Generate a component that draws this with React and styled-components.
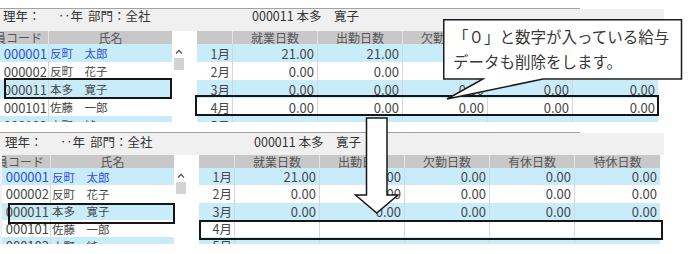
import styled, { createGlobalStyle } from "styled-components"

const GlobalStyle = createGlobalStyle`
  * { box-sizing: border-box; }
  html, body { margin: 0; padding: 0; background: #fff; }
  body { font-family: "Noto Sans CJK JP", "Noto Sans", sans-serif; }
`

const NARROW = `"Liberation Sans Narrow", "Noto Sans CJK JP", sans-serif`

const Page = styled.div`
  position: relative;
  width: 688px;
  height: 254px;
  overflow: hidden;
  background: #fff;
`

const Panel = styled.div`
  position: relative;
  width: 664px;
  height: ${({ $h }) => $h}px;
  margin-top: ${({ $mt }) => $mt}px;
  padding-left: ${({ $shift }) => $shift}px;
  display: flex;
  flex-direction: column;
  overflow: hidden;
  background: #f0f0f0;
`

const TopStrip = styled.div`
  height: 9px;
  flex-shrink: 0;
  margin-left: ${({ $shift }) => -$shift}px;
  background: #fff;
`

const Rule = styled.div`
  width: 580px;
  height: 9px;
  border-bottom: 1px solid #a2a2a2;
`

const HeaderBar = styled.div`
  height: 22px;
  flex-shrink: 0;
  display: flex;
  align-items: flex-start;
  padding: ${({ $pt }) => $pt}px 0 0 3px;
  font-family: ${NARROW};
  font-size: 12.5px;
  line-height: 14px;
  color: #333;
`

const Field = styled.span`
  width: ${({ $w }) => ($w ? `${$w}px` : "auto")};
  flex-shrink: 0;
  white-space: pre;
`

const GridArea = styled.div`
  flex: 1;
  min-height: 0;
  display: flex;
  background: #fff;
`

const LeftGrid = styled.div`
  width: 172px;
  flex-shrink: 0;
  overflow: hidden;
`

const Table = styled.div`
  display: flex;
  flex-direction: column;
  margin-left: ${({ $ml }) => $ml || 0}px;
`

const Row = styled.div`
  display: grid;
  grid-template-columns: ${({ $cols }) => $cols};
  height: ${({ $h }) => $h}px;
  flex-shrink: 0;
  background: ${({ $alt }) => ($alt ? "#c9ecfb" : "#fff")};
  color: ${({ $blue }) => ($blue ? "#2b50d8" : "#474747")};
`

const HeadRow = styled(Row)`
  background: #c8c8c8;
  color: #565656;
`

const Cell = styled.div`
  display: flex;
  align-items: center;
  justify-content: ${({ $align }) =>
    $align === "right" ? "flex-end" : $align === "center" ? "center" : "flex-start"};
  padding: 0 ${({ $pr }) => $pr ?? 3}px 0 ${({ $pl }) => $pl ?? 0}px;
  border-right: 1px solid ${({ $head }) => ($head ? "#e4e4e4" : "#d6d6d6")};
  font-family: ${({ $cjk }) => ($cjk ? `"Noto Sans CJK JP", sans-serif` : NARROW)};
  font-size: ${({ $fs }) => $fs || 13}px;
  white-space: pre;
  overflow: hidden;
  &:last-child { border-right: none; }
`

const ScrollCol = styled.div`
  width: 14px;
  flex-shrink: 0;
  display: flex;
  flex-direction: column;
  align-items: center;
  padding-top: ${({ $top }) => $top}px;
`

const Thumb = styled.div`
  width: 10px;
  height: 12px;
  margin-top: 4px;
  background: #d3d3d3;
`

const RightGrid = styled.div`
  width: 461px;
  flex-shrink: 0;
  margin-left: 11px;
  overflow: hidden;
`

const Mark = styled.div`
  position: absolute;
  left: ${({ $x }) => $x}px;
  top: ${({ $y }) => $y}px;
  width: ${({ $w }) => $w}px;
  height: ${({ $hh }) => $hh}px;
  border: 2px solid #161616;
`

const Callout = styled.div`
  position: absolute;
  left: 443px;
  top: 19px;
  width: 240px;
  height: 61px;
  z-index: 5;
`

const CalloutShape = styled.svg`
  position: absolute;
  left: 0;
  top: 0;
  overflow: visible;
`

const CalloutText = styled.div`
  position: relative;
  padding: 5px 0 0 10px;
  font-family: "Noto Sans CJK JP", sans-serif;
  font-size: 15.5px;
  line-height: 25px;
  color: #383838;
  white-space: nowrap;
`

const DownArrow = styled.svg`
  position: absolute;
  left: 350px;
  top: 116px;
  z-index: 5;
`

const LEFT_COLS = "73px 123px"
const RIGHT_COLS = "36px repeat(5, 85px)"
const HEADS = ["", "就業日数", "出勤日数", "欠勤日数", "有休日数", "特休日数"]

const people = [
  { code: "000001", name: "反町　太郎", blue: true },
  { code: "000002", name: "反町　花子" },
  { code: "000011", name: "本多　寛子" },
  { code: "000101", name: "佐藤　一郎" },
  { code: "000102", name: "小野　純一" },
]

const zeros = ["0.00", "0.00", "0.00", "0.00", "0.00"]
const first = ["21.00", "21.00", "0.00", "0.00", "0.00"]
const blank = ["", "", "", "", ""]

const before = [
  ["1月", first],
  ["2月", zeros],
  ["3月", zeros],
  ["4月", zeros],
  ["5月", blank],
]

const after = [
  ["1月", first],
  ["2月", zeros],
  ["3月", zeros],
  ["4月", blank],
  ["5月", blank],
]

function Screen({ h, mt, shift, pt, rowH, months, marks }) {
  return (
    <Panel $h={h} $mt={mt} $shift={shift}>
      <TopStrip $shift={shift}>
        <Rule />
      </TopStrip>
      <HeaderBar $pt={pt}>
        <Field $w={55}>理年：</Field>
        <Field $w={30}>‥年</Field>
        <Field $w={164}>部門：全社</Field>
        <Field>000011 本多　寛子</Field>
      </HeaderBar>
      <GridArea>
        <LeftGrid>
          <Table $ml={-24}>
            <HeadRow $cols={LEFT_COLS} $h={13}>
              <Cell $head $align="center" $pr={0} $cjk $fs={12}>社員コード</Cell>
              <Cell $head $align="center" $pr={0} $cjk $fs={12}>氏名</Cell>
            </HeadRow>
            {people.map((p, i) => (
              <Row key={p.code} $cols={LEFT_COLS} $h={rowH} $alt={i % 2 === 0} $blue={p.blue}>
                <Cell $align="right" $pr={1}>{p.code}</Cell>
                <Cell $pl={1} $cjk $fs={11.5}>{p.name}</Cell>
              </Row>
            ))}
          </Table>
        </LeftGrid>
        <ScrollCol $top={18}>
          <svg width="8" height="5" viewBox="0 0 8 5">
            <path d="M1 4.5 L4 1.5 L7 4.5" fill="none" stroke="#555" strokeWidth="1.3" />
          </svg>
          <Thumb />
        </ScrollCol>
        <RightGrid>
          <Table>
            <HeadRow $cols={RIGHT_COLS} $h={13}>
              {HEADS.map((t, i) => (
                <Cell key={i} $head $align="center" $pr={0} $cjk $fs={12}>{t}</Cell>
              ))}
            </HeadRow>
            {months.map(([m, vals], i) => (
              <Row key={m} $cols={RIGHT_COLS} $h={rowH} $alt={i % 2 === 0}>
                <Cell $align="right" $pr={2} $fs={12.5}>{m}</Cell>
                {vals.map((v, j) => (
                  <Cell key={j} $align="right" $pr={3}>{v}</Cell>
                ))}
              </Row>
            ))}
          </Table>
        </RightGrid>
      </GridArea>
      {marks.map((m, i) => (
        <Mark key={i} $x={m[0]} $y={m[1]} $w={m[2]} $hh={m[3]} />
      ))}
    </Panel>
  )
}

export default function App() {
  return (
    <Page>
      <GlobalStyle />
      <Screen
        h={122}
        mt={0}
        shift={0}
        pt={0}
        rowH={18}
        months={before}
        marks={[
          [4, 78, 168, 21],
          [195, 95, 464, 21],
        ]}
      />
      <Screen
        h={120}
        mt={2}
        shift={2}
        pt={2}
        rowH={17.3}
        months={after}
        marks={[
          [8, 79, 167, 21],
          [199, 96, 464, 20],
        ]}
      />
      <Callout>
        <CalloutShape width="240" height="82" viewBox="0 0 240 82">
          <path
            d="M0.75 0.75 H238.5 V60 H100 L4 80 L40 60 H0.75 Z"
            fill="#fff"
            stroke="#1c1c1c"
            strokeWidth="1.5"
            strokeLinejoin="miter"
          />
        </CalloutShape>
        <CalloutText>
          「０」と数字が入っている給与
          <br />
          データも削除をします。
        </CalloutText>
      </Callout>
      <DownArrow width="54" height="100" viewBox="0 0 54 100">
        <path
          d="M16.5 2 H37 V79 H48 L26.75 97 L5.5 79 H16.5 Z"
          fill="#fff"
          stroke="#161616"
          strokeWidth="1.5"
        />
      </DownArrow>
    </Page>
  )
}
